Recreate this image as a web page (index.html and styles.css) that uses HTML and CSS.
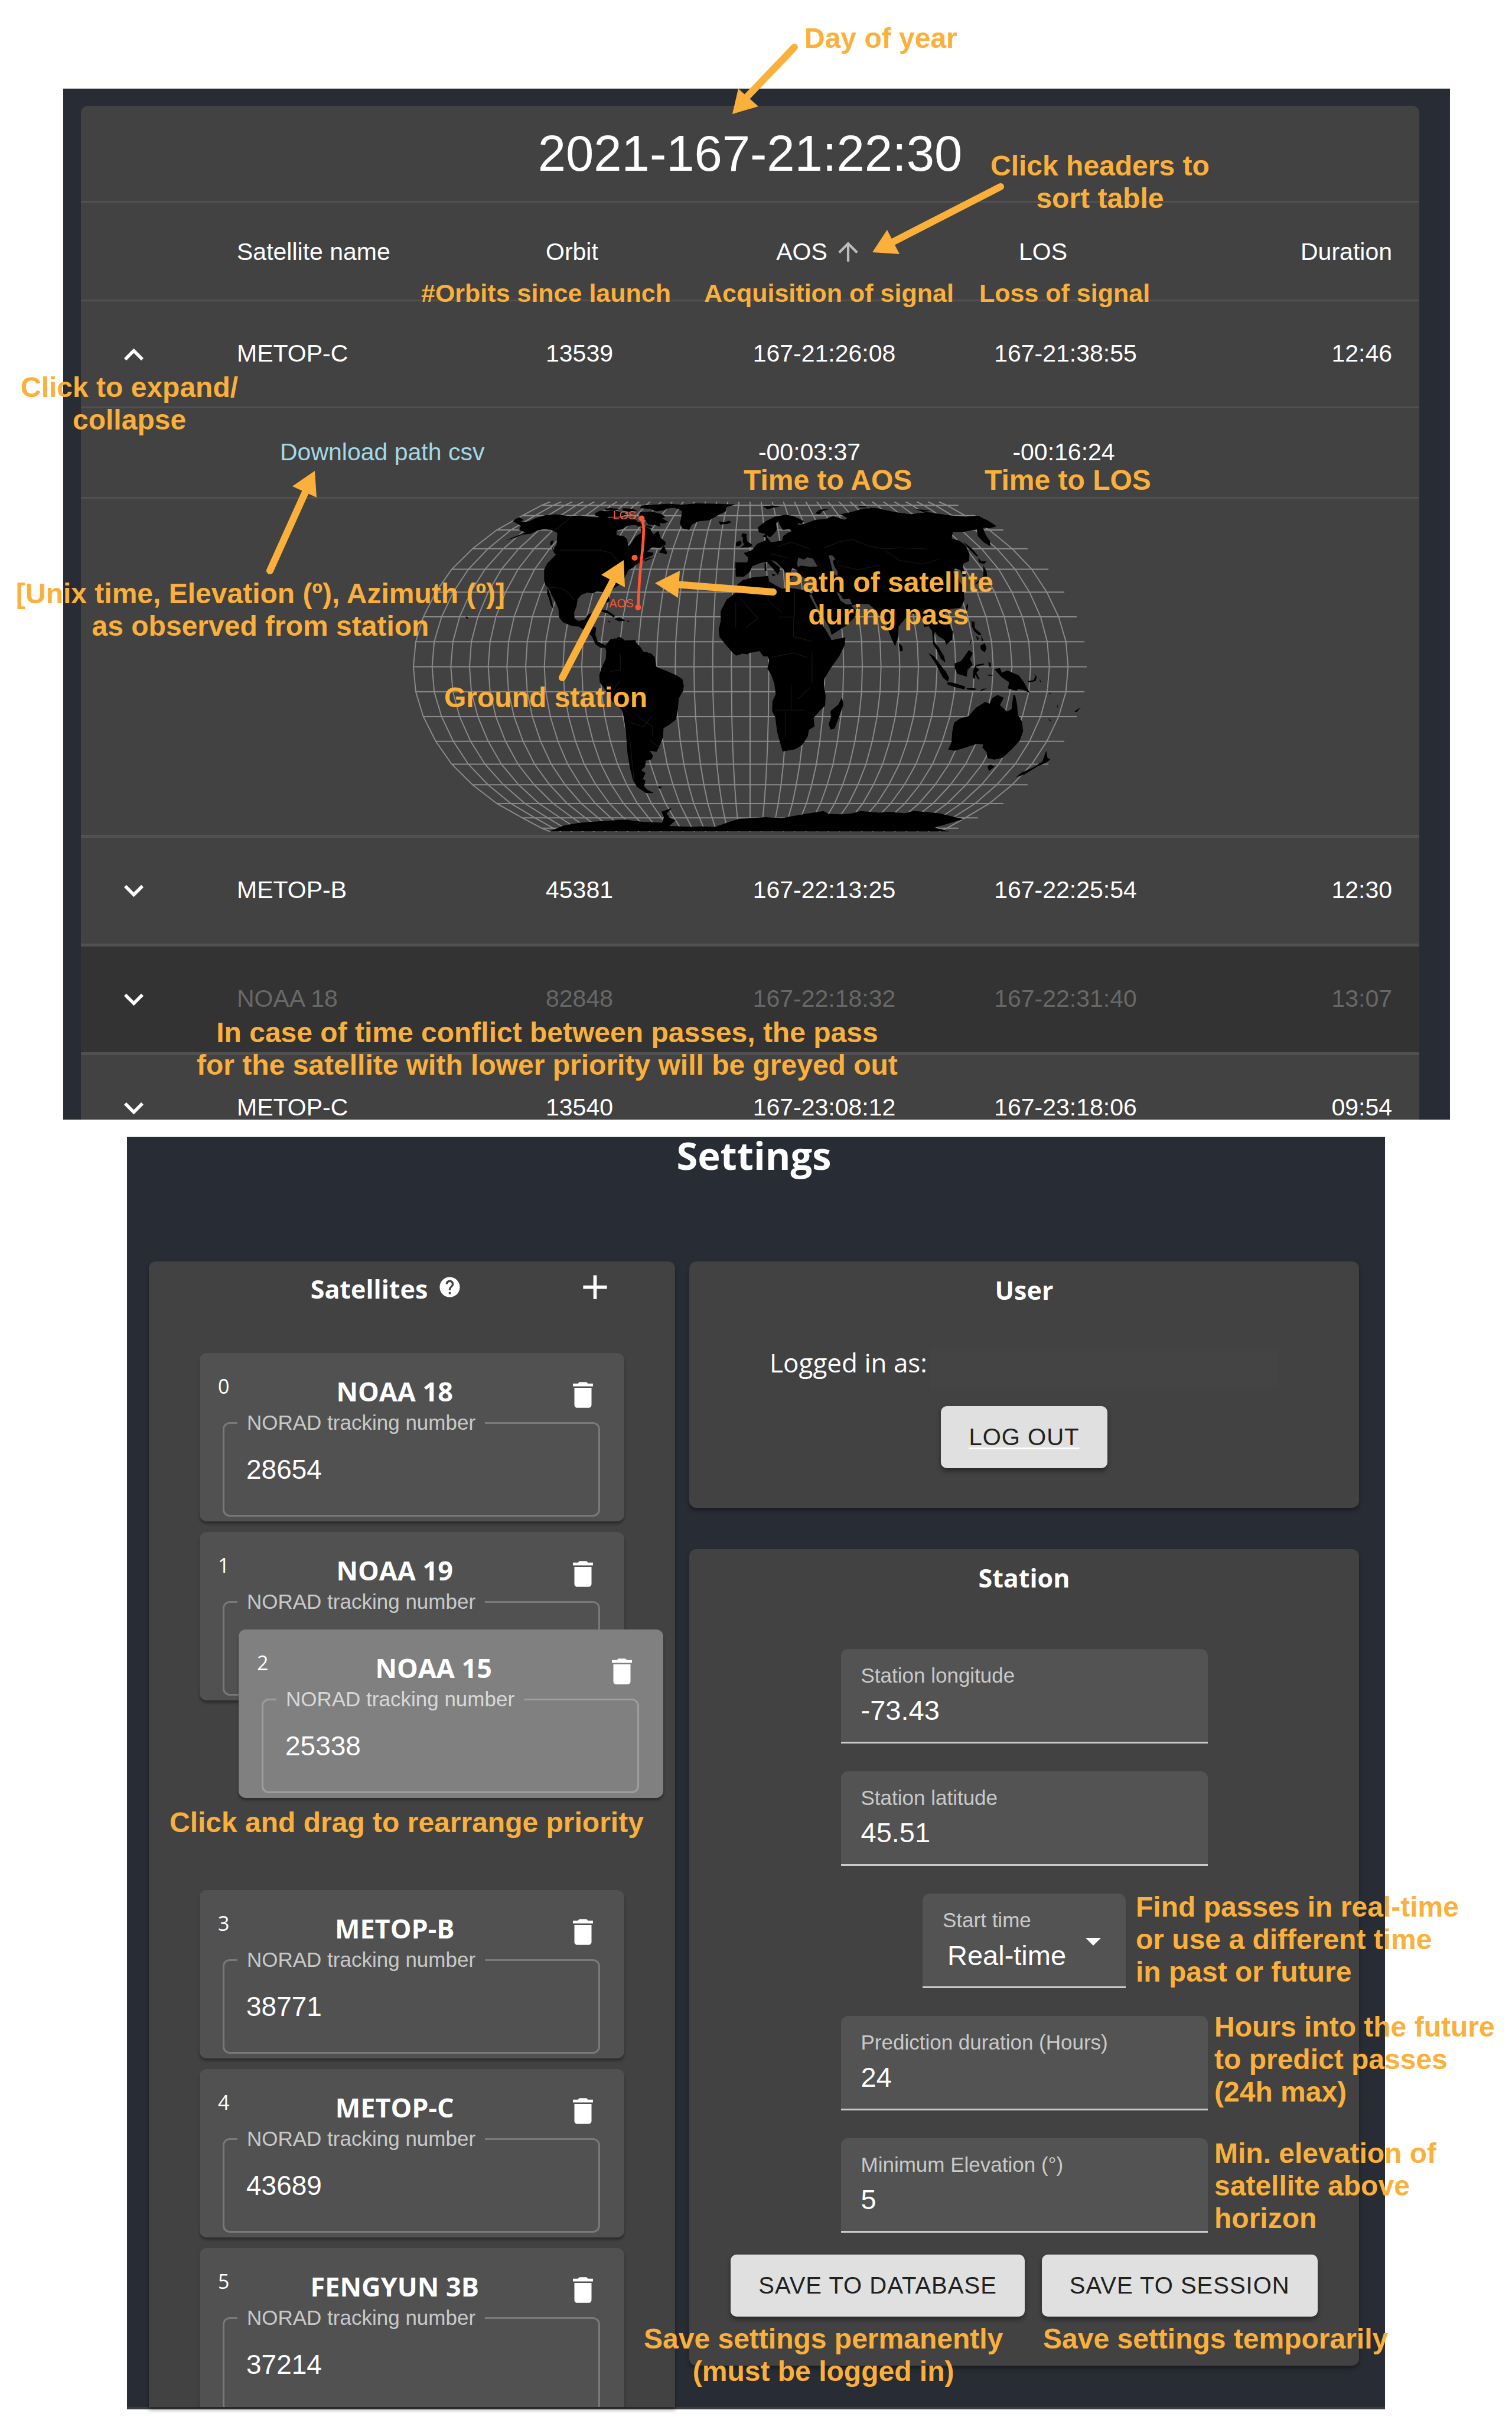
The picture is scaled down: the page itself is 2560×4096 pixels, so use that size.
FILE: index.html
```html
<!DOCTYPE html>
<html lang="en">
<head>
<meta charset="utf-8">
<title>Satellite passes and settings guide</title>
<link rel="stylesheet" href="styles.css">
<script src="graticule.js" defer></script>
</head>
<body>
<svg class="defs" aria-hidden="true">
  <symbol id="chevron-down" viewBox="6 8.3 12 8"><path d="M7.41 8.59 12 13.17l4.59-4.58L18 10l-6 6-6-6z"/></symbol>
  <symbol id="chevron-up" viewBox="6 7.7 12 8"><path d="m12 8-6 6 1.41 1.41L12 10.83l4.59 4.58L18 14z"/></symbol>
  <symbol id="arrow-up" viewBox="0 0 24 24"><path d="M4 12l1.41 1.41L11 7.83V20h2V7.83l5.58 5.59L20 12l-8-8-8 8z"/></symbol>
  <symbol id="trash" viewBox="0 0 24 24"><path d="M6 19c0 1.1.9 2 2 2h8c1.1 0 2-.9 2-2V7H6v12zM19 4h-3.500l-1-1h-5l-1 1H5v2h14V4z"/></symbol>
  <symbol id="plus" viewBox="0 0 24 24"><path d="M19 13h-6v6h-2v-6H5v-2h6V5h2v6h6v2z"/></symbol>
  <symbol id="help" viewBox="0 0 24 24"><path d="M12 2C6.480 2 2 6.480 2 12s4.480 10 10 10 10-4.480 10-10S17.520 2 12 2zm1 17h-2v-2h2v2zm2.070-7.750l-.9.920C13.450 12.900 13 13.500 13 15h-2v-.5c0-1.100.450-2.100 1.170-2.830l1.240-1.260c.370-.360.590-.860.590-1.410 0-1.100-.900-2-2-2s-2 .900-2 2H8c0-2.210 1.790-4 4-4s4 1.790 4 4c0 .880-.360 1.680-.930 2.250z"/></symbol>
</svg>

<div class="page">
  <section class="passes">
    <div class="passes-card">
      <h1 class="clock">2021-167-21:22:30</h1>
      <table class="pass-table">
        <colgroup>
          <col class="col-toggle"><col class="col-name"><col class="col-orbit"><col class="col-aos"><col class="col-los"><col>
        </colgroup>
        <thead>
          <tr class="head-row">
            <th></th>
            <th><button class="sort" type="button">Satellite name</button></th>
            <th><button class="sort" type="button">Orbit</button></th>
            <th class="time"><button class="sort" type="button">AOS<svg class="sort-icon"><use href="#arrow-up"/></svg></button></th>
            <th class="time"><button class="sort" type="button">LOS<svg class="sort-icon sort-icon-idle"><use href="#arrow-up"/></svg></button></th>
            <th class="duration"><button class="sort" type="button">Duration</button></th>
          </tr>
        </thead>
        <tbody>
          <tr class="pass-row pass-row-open">
            <td class="toggle-cell"><button class="toggle" type="button" aria-label="Collapse"><svg class="chevron"><use href="#chevron-up"/></svg></button></td>
            <td>METOP-C</td><td>13539</td><td class="time">167-21:26:08</td><td class="time">167-21:38:55</td><td class="duration">12:46</td>
          </tr>
          <tr class="detail-row">
            <td></td>
            <td class="download"><a class="download-link" href="#">Download path csv</a></td>
            <td></td>
            <td class="time until-aos">-00:03:37</td>
            <td class="time until-los">-00:16:24</td>
            <td></td>
          </tr>
          <tr class="map-row">
            <td colspan="6">
              <svg class="map" viewBox="67 60 2930 1440" role="img" aria-label="Path of METOP-C over the world">
                <path id="graticule" class="graticule" d=""/>
                <g class="land">
                  <path d="M505 150L515 140 533 132 551 144 537 152 557 154 575 150 605 136 645 124 690 120 750 128 795 125 855 133 905 131 950 140 985 134 1015 137 1040 146 1048 162 1028 166 1000 170 978 185 955 190 953 210 985 215 1000 228 1004 258 1015 248 1038 215 1062 200 1058 182 1078 176 1100 184 1113 208 1134 192 1145 222 1166 240 1165 252 1140 266 1108 262 1085 282 1112 286 1112 296 1078 312 1066 322 1048 332 1030 346 1004 364 986 400 962 428 925 450 916 465 925 492 916 504 902 480 892 456 868 454 850 462 826 459 800 470 785 488 780 520 770 545 772 572 790 582 815 576 832 552 860 548 850 575 838 600 865 610 862 642 872 672 900 684 908 696 885 698 862 682 845 646 820 626 790 606 762 604 722 588 705 566 702 530 690 502 672 468 660 442 645 425 640 405 640 360 654 332 680 306 694 290 682 268 694 250 697 200 670 188 640 184 612 190 580 205 545 208 520 220 472 233 515 216 560 198 532 188 540 170Z"/>
                  <path d="M654 438l10 22 8 30 9 40-12-16-8-30-8-20zM668 238l12-6-4 18-10 4zM672 262l20 20 6 14-12-4zM1137 286l14-20 8-10 14 30-6 8-14-6zM1075 318l22-8 20-4-18 8-24 10z"/>
                  <path d="M1062 82l118-8 64 5-20 10-50 6-14 8-34 4-26-10-45-4zM860 115l22-10 30 2 24-4 40 8 24 10-30 8-50 2-30 4-28-10zM900 95l30-2 40 4-20 6-44-2zM1055 112l50-4 46 12 14 12-14 6 26 14-18 8-20-2 6 16-26-8-28-2-14-20-26-16zM980 94l40 2 24 8-30 6-34-6zM1035 152l20 2 16 16-20 4-16-8zM1080 168l20 2 10 10-28-4z"/>
                  <path d="M1182 86l58-8 60-5 100 2 70 3-38 10-6 20-26 12-44 26-46 4-30 14-12 24-30-8-10-20 6-28 2-26-14-8zM1396 150l24 4 20-6 12 6-20 8-30 2z"/>
                  <path d="M888 532l24 4 36 24-8 6-22-16-28-8zM945 574l20-8 28 14-28 4zM915 582l14 2-8 4zM1000 580l14 3-14 2zM945 652l8 18-10 2zM905 483l8 14-4 8z"/>
                  <path d="M903 690l26-30 20 2 12-12 14 4 14 12 46-2 4 14 16 14 14 22 34 8 16 16 6 40 4 4 40 16 42 18 28 18 6 30-4 22-18 32-4 48-8 42-30 24-24 14-2 40-18 42-10 20-30-4 14 20-4 16-26 6-4 26-16 16 18 12-12 26 12 6-6 26 14 14 28 15-34 0-38-26-18-30-14-56-10-60-6-80-10-78-10-32-42-36-28-48-24-34-2-30 8-30 20-40 2-34zM1130 1298l22 2-12 8z"/>
                  <path d="M285 544l10 4M300 562l12 4-6 8z"/>
                  <path d="M665 1492l58-24 66-12 92-7 110-7 70 9 90 4 8-22-10-26 44-16-22 24 12 18 26 12-28 24 100 4 40-2 60 2 70-24 30-10 120-8 70 4 90-16 90-14 20 12 50 2 50-4 40-10 80 7 40-4 70 6 40-10 110 10 105 26-85 25-40 12 64 16z"/>
                </g>
                <g class="land" transform="translate(1470 0)">
                  <path d="M-2 328L50 328 54 308 34 288 70 276 92 248 128 234 132 222 116 216 130 202 136 222 152 240 176 238 200 234 206 214 226 200 242 194 234 184 204 188 190 164 184 148 174 160 178 188 164 206 148 220 128 206 100 198 96 176 130 150 170 130 216 122 250 128 296 150 282 162 268 156 272 168 302 160 346 144 392 140 422 128 470 144 484 136 452 120 502 110 552 96 602 92 642 100 688 110 758 120 828 110 894 120 938 126 996 130 1048 126 1094 148 1130 172 1100 180 1070 178 1084 212 1100 234 1102 258 1072 240 1048 214 1044 186 1008 192 984 197 940 197 935 225 968 234 994 254 1012 290 1010 322 985 334 984 352 998 382 985 392 972 362 950 354 940 372 962 392 968 412 985 432 990 490 975 524 930 530 905 546 905 562 922 592 940 628 937 662 912 684 904 664 874 645 862 628 858 670 880 698 902 735 908 762 888 746 870 706 855 682 850 626 836 605 815 608 812 580 790 550 760 550 735 570 705 606 703 652 690 692 678 666 660 620 650 590 620 556 600 530 575 508 530 508 500 515 520 536 515 566 480 600 415 642 406 612 374 556 346 504 328 466 345 440 345 402 300 397 270 382 265 362 245 352 238 366 240 398 225 395 205 356 175 326 152 318 190 350 190 366 182 382 165 360 135 326 110 330 72 344 60 370 35 390 0 390Z"/>
                  <path d="M140 387L144 411 172 427 202 443 226 437 310 451 328 466 318 470 342 514 360 561 378 603 396 631 415 665 475 653 471 687 449 733 413 783 385 829 381 849 389 905 387 949 365 969 337 1001 341 1039 317 1053 311 1083 287 1119 259 1137 203 1147 193 1113 179 1061 171 999 157 971 159 929 173 899 167 853 153 813 137 789 145 751 138 735 120 735 103 712 60 720 50 726 28 724 2 732 -15 718 -30 700 -70 652 -74 620 -65 580 -66 540 -40 490 2 458 6 425 30 405 70 394Z"/>
                  <path d="M460 912l6 32-14 40-24 64-18 4-8-24 10-26-2-30 34-28z"/>
                  <path d="M30 202l18 4-2 12 4 20 22 14-6 10-44 2 14-12-6-16 2-12-8-10zM2 240l18-6 6 10-8 12-18 2zM125 335l6-8 2 38-8-2zM155 378l20 4-14 6zM232 384l26 2-16 4z"/>
                  <path d="M118 86l40-4 34 4-30 6-24 6zM344 116l18-16 48-4-34 10-14 14zM528 82l70 8-60 0zM778 98l70 6-40 6zM1036 120l12 4-8 2z"/>
                  <path d="M984 238l40 32 26 32-8 0-34-34zM1050 308l12 14 24 2-12 12-22-8zM1072 342l14 24 4 32-22 12-34 14 24-24 14-14z"/>
                  <path d="M706 678l14 12 4 20-14 4zM1002 505l4 10-4 24-6-12zM1020 582l14 4 0 26 18 16 12 12-10 4-20-16-12-22zM1040 645l14 14-8 6zM1062 645l10 20-6 6zM1058 690l20-12 8 22-8 18-16-12zM1025 660l-14 30 6-22z"/>
                  <path d="M834 720l26 16 24 34 26 32 14 26-6 16-20-16-16-30-18-34zM914 848l20 0 24 6 36 12-4 12-34-8-38-12zM1000 872l24 0 20 4-14 6-30-4zM1056 888l12-12 20-2zM948 765l28-10 34-48 16 14-12 26 12 26-22 20-4 30-40-12-12-26zM1030 790l10-18 34-6 0 6-36 8 16 12-12 14 14 28-8 0-10-20-4 20-8-8zM1094 760l10 4 0 20-8-8zM1086 814l34 2-20 4z"/>
                  <path d="M1120 790l24-4 8 20 24-10 50 22 22 30 26 46-30-14-22-4-6 8-38-10 6-26-34-24zM1262 842l28-4 8-18-12-12 18 14-6 20-26 6zM1314 834l12 14-8-4zM1338 860l24 28-8-10zM1356 892l10 4-6 2zM1392 942l4 18-4-6zM1352 998l16 20-8-4zM1466 974l28-18-18 20z"/>
                  <path d="M946 1022l26-18 36-10 32-36 40-26 20 8 10-24 24-14 26 12-16 32 30 28 20-10 8-62 8 2 8 40 4 44 18 32 4 40-14 40-34 36-40 38-36 8-30-6-4-26-18-20 4-14-28-2-62 20-36 10-26-6 14-30 4-50zM1090 1210l14-6 16 8-24 20zM1344 1144l6 30 12 8-24 16-28 12-60 36-36 12 24-20 46-20 44-28z"/>
                </g>
                <g class="water" transform="translate(1470 0)">
                  <path d="M266 332l4-24 26 8 14-10 24 6 20 34-30 2-40-6-16 6zM402 298l16 0 14 16-12 8 8 26 14 22-2 18-18-10-8-34zM436 456l14 8 16 24 28-2 10 24-26 0-24-16z"/>
                </g>
                <g class="frontiers">
                  <path d="M705 275h180l50 15 20 30M685 190l75-60M655 435l60 5 30 20 25 30M925 800l45-5v-70M970 840l-30 40 60 100M1010 1020l60 20 40-50M1040 990l70 50v40M1100 1100l40 30M1010 1080l20 200"/>
                  <path transform="translate(1470 0)" d="M15 480l80 90M140 410v85l60 50M255 450v115h-70M0 500v110M95 570l-50 40M250 570v80l80 20M150 740l100-20 60 20M170 968h130M240 860v110M215 975v110M330 720v130M270 920l50-50M385 265l60-25 60-10 80 30 60 10 60-5 120 5M650 280l60 40 100 15 70-20M440 340l90 20 100-20M180 260l60-20 80 30M150 290l80 20"/>
                </g>
                <g class="track">
                  <path d="M1062 138C1074 165 1071 200 1069 235C1064 300 1055 370 1052 420L1047 523"/>
                  <circle cx="1062" cy="138" r="13"/><circle cx="1047" cy="523" r="13"/><circle cx="1032" cy="308" r="13"/>
                  <text x="938" y="141">LOS</text>
                  <text x="922" y="524">AOS</text>
                </g>
              </svg>
            </td>
          </tr>
          <tr class="pass-row">
            <td class="toggle-cell"><button class="toggle" type="button" aria-label="Expand"><svg class="chevron"><use href="#chevron-down"/></svg></button></td>
            <td>METOP-B</td><td>45381</td><td class="time">167-22:13:25</td><td class="time">167-22:25:54</td><td class="duration">12:30</td>
          </tr>
          <tr class="pass-row pass-row-conflict">
            <td class="toggle-cell"><button class="toggle" type="button" aria-label="Expand"><svg class="chevron"><use href="#chevron-down"/></svg></button></td>
            <td>NOAA 18</td><td>82848</td><td class="time">167-22:18:32</td><td class="time">167-22:31:40</td><td class="duration">13:07</td>
          </tr>
          <tr class="pass-row pass-row-last">
            <td class="toggle-cell"><button class="toggle" type="button" aria-label="Expand"><svg class="chevron"><use href="#chevron-down"/></svg></button></td>
            <td>METOP-C</td><td>13540</td><td class="time">167-23:08:12</td><td class="time">167-23:18:06</td><td class="duration">09:54</td>
          </tr>
        </tbody>
      </table>
    </div>
  </section>

  <section class="settings">
    <h2 class="settings-title">Settings</h2>
    <div class="settings-grid">
      <div class="paper satellites">
        <div class="satellites-head">
          <div class="satellites-label"><h3 class="heading">Satellites</h3><svg class="help-icon"><use href="#help"/></svg></div>
          <button class="icon-button" type="button" aria-label="Add satellite"><svg class="plus-icon"><use href="#plus"/></svg></button>
        </div>
        <div class="satellite-list">
          <article class="satellite">
            <header class="satellite-head"><span class="priority">0</span><h4 class="satellite-name">NOAA 18</h4><button class="icon-button" type="button" aria-label="Delete"><svg class="trash-icon"><use href="#trash"/></svg></button></header>
            <fieldset class="outlined"><legend><label for="norad-0">NORAD tracking number</label></legend><input id="norad-0" type="text" value="28654"></fieldset>
          </article>
          <article class="satellite">
            <header class="satellite-head"><span class="priority">1</span><h4 class="satellite-name">NOAA 19</h4><button class="icon-button" type="button" aria-label="Delete"><svg class="trash-icon"><use href="#trash"/></svg></button></header>
            <fieldset class="outlined"><legend><label for="norad-1">NORAD tracking number</label></legend><input id="norad-1" type="text" value=""></fieldset>
          </article>
          <div class="drop-slot">
            <article class="satellite satellite-dragged">
              <header class="satellite-head"><span class="priority">2</span><h4 class="satellite-name">NOAA 15</h4><button class="icon-button" type="button" aria-label="Delete"><svg class="trash-icon"><use href="#trash"/></svg></button></header>
              <fieldset class="outlined"><legend><label for="norad-2">NORAD tracking number</label></legend><input id="norad-2" type="text" value="25338"></fieldset>
            </article>
          </div>
          <article class="satellite">
            <header class="satellite-head"><span class="priority">3</span><h4 class="satellite-name">METOP-B</h4><button class="icon-button" type="button" aria-label="Delete"><svg class="trash-icon"><use href="#trash"/></svg></button></header>
            <fieldset class="outlined"><legend><label for="norad-3">NORAD tracking number</label></legend><input id="norad-3" type="text" value="38771"></fieldset>
          </article>
          <article class="satellite">
            <header class="satellite-head"><span class="priority">4</span><h4 class="satellite-name">METOP-C</h4><button class="icon-button" type="button" aria-label="Delete"><svg class="trash-icon"><use href="#trash"/></svg></button></header>
            <fieldset class="outlined"><legend><label for="norad-4">NORAD tracking number</label></legend><input id="norad-4" type="text" value="43689"></fieldset>
          </article>
          <article class="satellite">
            <header class="satellite-head"><span class="priority">5</span><h4 class="satellite-name">FENGYUN 3B</h4><button class="icon-button" type="button" aria-label="Delete"><svg class="trash-icon"><use href="#trash"/></svg></button></header>
            <fieldset class="outlined"><legend><label for="norad-5">NORAD tracking number</label></legend><input id="norad-5" type="text" value="37214"></fieldset>
          </article>
        </div>
      </div>

      <div class="settings-side">
        <div class="paper user">
          <h3 class="heading">User</h3>
          <p class="account">Logged in as:<span class="account-name"></span></p>
          <button class="button button-link" type="button"><span>LOG OUT</span></button>
        </div>
        <form class="paper station">
          <h3 class="heading">Station</h3>
          <div class="fields">
            <div class="field"><label for="lon">Station longitude</label><input id="lon" type="text" value="-73.43"></div>
            <div class="field"><label for="lat">Station latitude</label><input id="lat" type="text" value="45.51"></div>
            <div class="field field-select">
              <label for="start">Start time</label>
              <select id="start"><option>Real-time</option></select>
              <svg class="caret" viewBox="0 0 10 5"><path d="M0 0l5 5 5-5z"/></svg>
            </div>
            <div class="field"><label for="hours">Prediction duration (Hours)</label><input id="hours" type="text" value="24"></div>
            <div class="field"><label for="elevation">Minimum Elevation (°)</label><input id="elevation" type="text" value="5"></div>
          </div>
          <div class="actions">
            <button class="button" type="button">SAVE TO DATABASE</button>
            <button class="button" type="button">SAVE TO SESSION</button>
          </div>
        </form>
      </div>
    </div>
  </section>

  <svg class="arrows" aria-hidden="true">
    <g class="shafts">
      <path d="M1345 80L1257 172"/><path d="M1694 316L1505 413"/><path d="M457 966L521 824"/><path d="M952 1147L1042 975"/><path d="M1309 1002L1143 989"/>
    </g>
    <g class="heads">
      <path d="M1240 193l10-43 34 30z"/><path d="M1477 427l25-38 21 41z"/><path d="M533 797l-38 26 41 19z"/><path d="M1056 948l-38 25 40 21z"/><path d="M1109 987l42-21-3 46z"/>
    </g>
  </svg>
  <p class="note note-day">Day of year</p>
  <p class="note note-sort">Click headers to<br>sort table</p>
  <p class="note note-small note-orbits">#Orbits since launch</p>
  <p class="note note-small note-aos">Acquisition of signal</p>
  <p class="note note-small note-los">Loss of signal</p>
  <p class="note note-expand">Click to expand/<br>collapse</p>
  <p class="note note-to-aos">Time to AOS</p>
  <p class="note note-to-los">Time to LOS</p>
  <p class="note note-csv">[Unix time, Elevation (º), Azimuth (º)]<br>as observed from station</p>
  <p class="note note-ground">Ground station</p>
  <p class="note note-path">Path of satellite<br>during pass</p>
  <p class="note note-conflict">In case of time conflict between passes, the pass<br>for the satellite with lower priority will be greyed out</p>
  <p class="note note-drag">Click and drag to rearrange priority</p>
  <p class="note note-left note-start">Find passes in real-time<br>or use a different time<br>in past or future</p>
  <p class="note note-left note-hours">Hours into the future<br>to predict passes<br>(24h max)</p>
  <p class="note note-left note-elevation">Min. elevation of<br>satellite above<br>horizon</p>
  <p class="note note-database">Save settings permanently<br>(must be logged in)</p>
  <p class="note note-session">Save settings temporarily</p>
</div>
</body>
</html>
```
FILE: styles.css
```css
* { box-sizing: border-box; }

body {
  margin: 0;
  background: #fff;
  color: #fff;
  font-family: "Liberation Sans", Arial, sans-serif;
}

h1, h2, h3, h4, p { margin: 0; }

button, input, select {
  margin: 0;
  padding: 0;
  border: 0;
  background: none;
  color: inherit;
  font: inherit;
}

svg { fill: currentColor; }

.defs { display: none; }

.page {
  position: relative;
  padding: 150px 0 18px;
}

/* Pass table */

.passes {
  margin: 0 105px 0 107px;
  padding: 29px 52px 0 30px;
  background: #282c34;
}

.passes-card {
  border-radius: 12px 12px 0 0;
  background: #424242;
}

.clock {
  padding: 33px 0 32px;
  border-bottom: 3px solid #515151;
  font-size: 85px;
  font-weight: 400;
  line-height: 96px;
  text-align: center;
}

.pass-table {
  width: 100%;
  border-spacing: 0;
  table-layout: fixed;
  font-size: 41px;
  line-height: 48px;
}

.col-toggle { width: 264px; }
.col-name { width: 523px; }
.col-orbit { width: 315px; }
.col-aos { width: 313px; }
.col-los { width: 504px; }

.pass-table th,
.pass-table td {
  padding: 64px 0 67px;
  border-bottom: 5px solid #515151;
  font-weight: 400;
  text-align: left;
  vertical-align: top;
  white-space: nowrap;
}

.pass-table .time { text-align: center; }

.pass-table .duration {
  padding-right: 46px;
  text-align: right;
}

.pass-table .head-row th {
  padding-top: 59px;
  padding-bottom: 57px;
  border-bottom-width: 3px;
}

.pass-table .head-row .time { padding-right: 16px; }

.sort {
  display: inline-flex;
  align-items: center;
  gap: 10px;
  height: 48px;
}

.sort-icon {
  width: 50px;
  height: 50px;
  color: #bdbdbd;
}

.sort-icon-idle { opacity: 0; }

.pass-table .pass-row-open td {
  padding-bottom: 66px;
  border-bottom-width: 3px;
}

.pass-table .toggle-cell { padding: 79px 0 0 73px; }

.toggle { display: block; }

.chevron {
  display: block;
  width: 33px;
  height: 22px;
}

.pass-table .detail-row td {
  padding-top: 50px;
  padding-bottom: 52px;
  border-bottom-width: 3px;
}

.pass-table .detail-row .download { padding-left: 73px; }
.pass-table .detail-row .until-aos { padding-right: 50px; }
.pass-table .detail-row .until-los { padding-right: 6px; }

.download-link {
  color: #a2d9e7;
  text-decoration: none;
}

.pass-table .map-row td { padding: 3px 0; }

.map {
  display: block;
  width: 1146px;
  height: 563px;
  margin: 0 auto;
}

.graticule {
  fill: none;
  stroke: #8a8a8a;
  stroke-width: 5;
}

.land { fill: #000; }
.water { fill: #424242; }

.frontiers {
  fill: none;
  stroke: #161616;
  stroke-width: 3;
}

.track { fill: #ff5533; }

.track path {
  fill: none;
  stroke: #ff5533;
  stroke-width: 12;
}

.track text { font-size: 50px; }

.pass-table .pass-row-conflict td {
  background: #333;
  color: #686868;
}

.pass-table .pass-row-conflict .toggle { color: #fff; }

.pass-table .pass-row-last td {
  padding-top: 67px;
  padding-bottom: 0;
  border-bottom: 0;
  line-height: 42px;
}

.pass-table .pass-row-last .toggle-cell { padding-top: 79px; }

/* Settings */

.settings {
  margin: 29px 215px 0;
  padding: 0 44px 0 37px;
  border-bottom: 4px solid #3b3d42;
  background: #282c34;
}

.settings-title {
  margin-bottom: 149px;
  font: 700 65px/62px "Open Sans", "Noto Sans", sans-serif;
  text-align: center;
}

.settings-grid {
  display: grid;
  grid-template-columns: 11fr 14fr;
  column-gap: 24px;
}

.paper {
  border-radius: 12px;
  background: #424242;
  box-shadow: 0 5px 6px rgba(0, 0, 0, 0.35);
}

.heading {
  font: 700 43px/62px "Open Sans", "Noto Sans", sans-serif;
}

.satellites {
  contain: size;
  overflow: hidden;
  border-radius: 12px 12px 0 0;
}

.satellites-head {
  display: flex;
  align-items: center;
  padding: 8px 101px 0 83px;
  margin-bottom: 77px;
}

.satellites-label {
  display: flex;
  flex: 1;
  align-items: center;
  justify-content: center;
  gap: 17px;
}

.satellites-label .heading { padding-top: 8px; }

.help-icon {
  width: 41px;
  height: 41px;
}

.icon-button svg { display: block; }

.plus-icon {
  width: 69px;
  height: 69px;
}

.satellite-list {
  display: flex;
  flex-direction: column;
  gap: 18px;
  padding: 0 86px;
}

.satellite,
.drop-slot {
  flex: none;
  height: 285px;
}

.satellite {
  padding: 0 41px 0 39px;
  border-radius: 12px;
  background: #515151;
  box-shadow: 0 4px 4px rgba(0, 0, 0, 0.35);
}

.drop-slot { position: relative; }

.satellite-dragged {
  position: absolute;
  top: -138px;
  left: 66px;
  width: 100%;
  background: #808080;
}

.satellite-head {
  display: flex;
  align-items: flex-start;
  height: 100px;
  margin-left: -8px;
  padding-top: 35px;
}

.priority { font: 34px/42px "Open Sans", "Noto Sans", sans-serif; }

.satellite-name {
  flex: 1;
  padding-right: 10px;
  font: 700 45px/60px "Open Sans", "Noto Sans", sans-serif;
  text-align: center;
}

.trash-icon {
  width: 58px;
  height: 58px;
  margin-top: 7px;
}

.outlined {
  height: 177px;
  min-width: 0;
  margin: 0;
  padding: 36px 37px 0;
  border: 3px solid rgba(255, 255, 255, 0.23);
  border-radius: 12px;
}

.outlined legend {
  margin-left: -15px;
  padding: 0 16px;
  color: rgba(255, 255, 255, 0.7);
  font-size: 35px;
  line-height: 36px;
}

.outlined input {
  display: block;
  width: 100%;
  height: 50px;
  font-size: 46px;
}

.settings-side {
  display: flex;
  flex-direction: column;
  gap: 70px;
  padding-bottom: 70px;
}

.user,
.station {
  display: flex;
  flex-direction: column;
  align-items: center;
  padding-top: 18px;
}

.user { padding-bottom: 67px; }

.account {
  display: flex;
  gap: 5px;
  margin: 61px 0 29px;
  font: 44px/60px "Open Sans", "Noto Sans", sans-serif;
}

.account-name {
  width: 590px;
  height: 70px;
  margin-top: 5px;
  background: #444;
}

.button {
  height: 105px;
  padding: 0 47px;
  border-radius: 10px;
  background: #e0e0e0;
  box-shadow: 0 5px 8px rgba(0, 0, 0, 0.4);
  color: #212121;
  font-size: 40px;
  letter-spacing: 1px;
}

.button-link span {
  text-decoration: underline;
  text-decoration-color: #fff;
  text-decoration-thickness: 3px;
  text-underline-offset: 4px;
}

.station { padding-bottom: 83px; }

.fields {
  display: flex;
  flex-direction: column;
  align-items: center;
  gap: 47px;
  margin: 89px 0 37px;
}

.field {
  position: relative;
  width: 621px;
  padding: 25px 34px 29px;
  border-bottom: 3px solid #cbcbcb;
  border-radius: 12px 12px 0 0;
  background: #535353;
}

.field label {
  display: block;
  margin-bottom: 13px;
  color: rgba(255, 255, 255, 0.7);
  font-size: 35px;
  line-height: 40px;
}

.field input,
.field select {
  display: block;
  width: 100%;
  height: 50px;
  font-size: 47px;
}

.field-select { width: 344px; }

.field select {
  padding-left: 8px;
  appearance: none;
}

.caret {
  position: absolute;
  top: 75px;
  right: 42px;
  width: 26px;
  height: 13px;
}

.actions {
  display: flex;
  gap: 29px;
}

/* Notes laid over the panels */

.arrows {
  position: absolute;
  top: 0;
  left: 0;
  width: 100%;
  height: 100%;
  color: #fbb03b;
  pointer-events: none;
}

.shafts {
  fill: none;
  stroke: currentColor;
  stroke-width: 12;
  stroke-linecap: round;
}

.note {
  position: absolute;
  color: #fbb03b;
  font-size: 48px;
  font-weight: 700;
  line-height: 55px;
  text-align: center;
  white-space: nowrap;
}

.note-small { font-size: 43px; }
.note-left { text-align: left; }

.note-day { top: 37px; left: 1362px; }
.note-sort { top: 253px; left: 1677px; }
.note-orbits { top: 469px; left: 713px; }
.note-aos { top: 469px; left: 1192px; }
.note-los { top: 469px; left: 1658px; }
.note-expand { top: 628px; left: 35px; }
.note-to-aos { top: 785px; left: 1259px; }
.note-to-los { top: 785px; left: 1667px; }
.note-csv { top: 977px; left: 27px; }
.note-ground { top: 1153px; left: 752px; }
.note-path { top: 958px; left: 1327px; }
.note-conflict { top: 1720px; left: 333px; }
.note-drag { top: 3057px; left: 287px; }
.note-start { top: 3200px; left: 1923px; }
.note-hours { top: 3403px; left: 2056px; }
.note-elevation { top: 3617px; left: 2056px; }
.note-database { top: 3931px; left: 1090px; }
.note-session { top: 3931px; left: 1766px; }
```
FILE: graticule.js
```js
// Half-width and height of each parallel, every ten degrees from the equator,
// ending with the edge of the map.
const HALF_WIDTHS = [1458, 1448, 1415, 1361, 1292, 1202, 1097, 987, 902, 866];
const HEIGHTS = [0, 108, 216, 323, 422, 511, 592, 654, 699, 714];
const CENTER_X = 1532;
const CENTER_Y = 780;

const rows = [];
for (let i = HEIGHTS.length - 1; i > 0; i--) rows.push([HALF_WIDTHS[i], -HEIGHTS[i]]);
for (let i = 0; i < HEIGHTS.length; i++) rows.push([HALF_WIDTHS[i], HEIGHTS[i]]);

let d = "";
for (let lon = -180; lon < 180; lon += 10) {
  rows.forEach(([half, y], i) => {
    d += `${i ? "L" : "M"}${Math.round(CENTER_X + (half * lon) / 180)} ${CENTER_Y + y}`;
  });
}
rows.slice(1, -1).forEach(([half, y]) => {
  d += `M${CENTER_X - half} ${CENTER_Y + y}H${CENTER_X + half}`;
});
document.getElementById("graticule").setAttribute("d", d);
```
